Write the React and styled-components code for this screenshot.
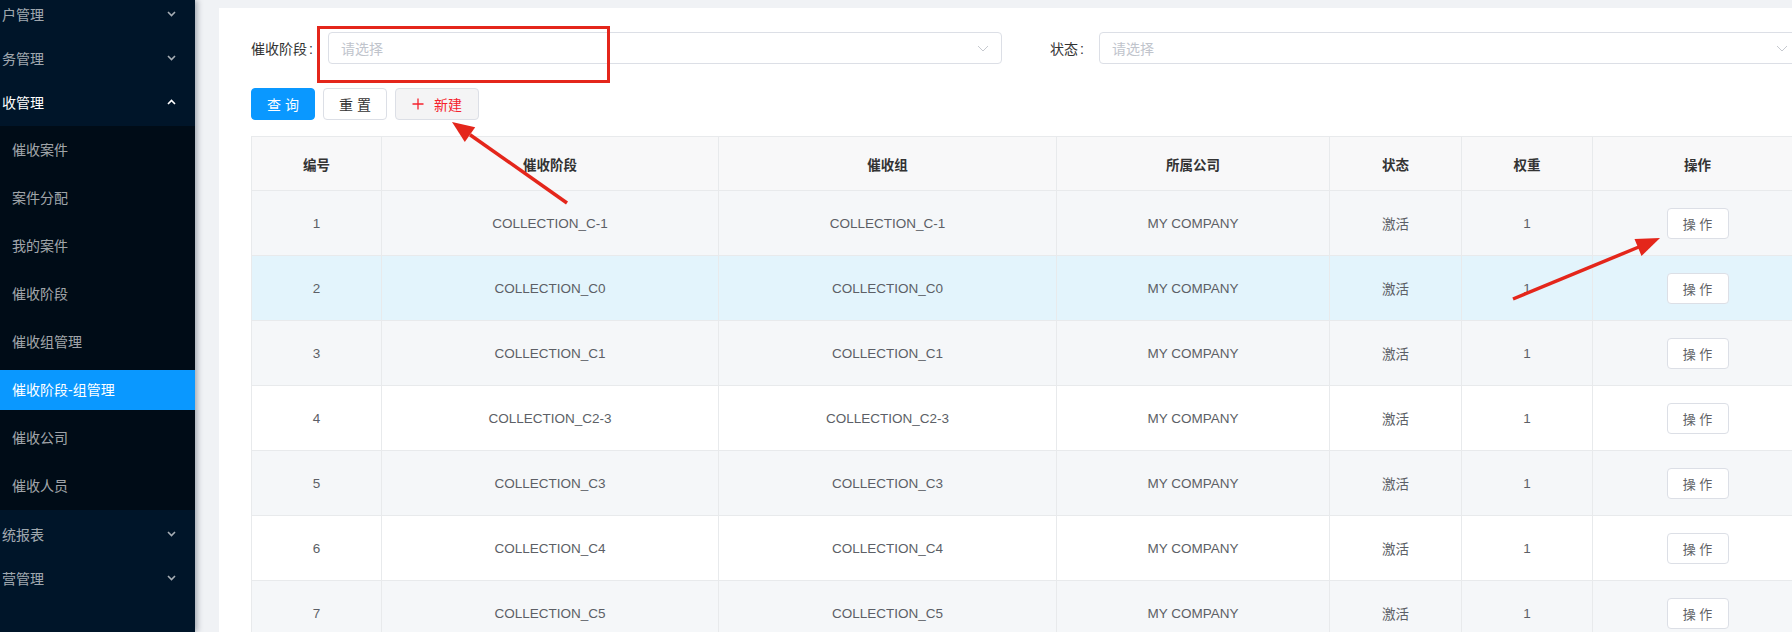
import React from "react";
import styled, { createGlobalStyle, css } from "styled-components";

const GlobalStyle = createGlobalStyle`
  html, body {
    margin: 0;
    padding: 0;
    overflow: hidden;
    background: #f0f2f5;
  }
  body {
    font-family: "Liberation Sans", "Noto Sans CJK SC", sans-serif;
    font-size: 14px;
    color: #333;
  }
  * { box-sizing: border-box; }
`;

// the sidebar is scrolled sideways in the shot, so only the visible part of each title is kept
const menus = [
  { title: "户管理" },
  { title: "务管理" },
  {
    title: "收管理",
    open: true,
    children: [
      "催收案件",
      "案件分配",
      "我的案件",
      "催收阶段",
      "催收组管理",
      "催收阶段-组管理",
      "催收公司",
      "催收人员",
    ],
    active: "催收阶段-组管理",
  },
  { title: "统报表" },
  { title: "营管理" },
];

const columns = [
  { key: "id", title: "编号", width: 130 },
  { key: "stage", title: "催收阶段", width: 337 },
  { key: "group", title: "催收组", width: 338 },
  { key: "company", title: "所属公司", width: 273 },
  { key: "status", title: "状态", width: 132 },
  { key: "weight", title: "权重", width: 131 },
  { key: "op", title: "操作", width: 210 },
];

const stages = ["C-1", "C0", "C1", "C2-3", "C3", "C4", "C5"];
const rows = stages.map((s, i) => ({
  id: i + 1,
  stage: `COLLECTION_${s}`,
  group: `COLLECTION_${s}`,
  company: "MY COMPANY",
  status: "激活",
  weight: 1,
}));

function Chevron({ up }) {
  return (
    <svg width="9" height="6" viewBox="0 0 9 6">
      <polyline
        points={up ? "1,5 4.5,1.5 8,5" : "1,1 4.5,4.5 8,1"}
        fill="none"
        stroke="currentColor"
        strokeWidth="1.6"
      />
    </svg>
  );
}

function SelectArrow() {
  return (
    <svg width="12" height="7" viewBox="0 0 12 7">
      <polyline points="1,1 6,6 11,1" fill="none" stroke="#c6c9cf" strokeWidth="1" />
    </svg>
  );
}

function Plus() {
  return (
    <svg width="12" height="12" viewBox="0 0 12 12">
      <path d="M6 0.5V11.5M0.5 6H11.5" stroke="#f5222d" strokeWidth="1.3" />
    </svg>
  );
}

function App() {
  return (
    <Layout>
      <GlobalStyle />
      <Sidebar>
        <Menu>
          {menus.map((m) => (
            <Group key={m.title}>
              <Title $open={m.open}>
                <span>{m.title}</span>
                <Chevron up={m.open} />
              </Title>
              {m.children && (
                <SubList>
                  {m.children.map((c) => (
                    <SubItem key={c} $active={c === m.active}>
                      {c}
                    </SubItem>
                  ))}
                </SubList>
              )}
            </Group>
          ))}
        </Menu>
      </Sidebar>

      <Main>
        <Card>
          <FormRow>
            <FormItem>
              <Label>
                催收阶段<Colon>:</Colon>
              </Label>
              <Select>
                <Placeholder>请选择</Placeholder>
                <SelectArrow />
              </Select>
            </FormItem>
            <FormItem>
              <Label>
                状态<Colon>:</Colon>
              </Label>
              <Select>
                <Placeholder>请选择</Placeholder>
                <SelectArrow />
              </Select>
            </FormItem>
          </FormRow>

          <ButtonRow>
            <Button $variant="primary">查 询</Button>
            <Button>重 置</Button>
            <Button $variant="create">
              <Plus />
              新建
            </Button>
          </ButtonRow>

          <Table>
            <colgroup>
              {columns.map((c) => (
                <col key={c.key} style={{ width: c.width }} />
              ))}
            </colgroup>
            <thead>
              <tr>
                {columns.map((c) => (
                  <Th key={c.key}>{c.title}</Th>
                ))}
              </tr>
            </thead>
            <tbody>
              {rows.map((r, i) => (
                <Tr key={r.id} $striped={i % 2 === 0} $hover={i === 1}>
                  <Td>{r.id}</Td>
                  <Td>{r.stage}</Td>
                  <Td>{r.group}</Td>
                  <Td>{r.company}</Td>
                  <Td>{r.status}</Td>
                  <Td>{r.weight}</Td>
                  <Td>
                    <OpButton>操 作</OpButton>
                  </Td>
                </Tr>
              ))}
            </tbody>
          </Table>
        </Card>
      </Main>

      <Annotations width="1792" height="632" viewBox="0 0 1792 632">
        <rect x="318.5" y="27.5" width="290" height="54" fill="none" stroke="#e4261b" strokeWidth="3" />
        <line x1="567" y1="203" x2="470" y2="134.7" stroke="#e4261b" strokeWidth="3.5" />
        <polygon points="452,122 475.2,127.3 464.8,142.1" fill="#e4261b" />
        <line x1="1513" y1="299" x2="1640" y2="246.5" stroke="#e4261b" strokeWidth="3.5" />
        <polygon points="1660,238 1641.5,256 1634.5,239" fill="#e4261b" />
      </Annotations>
    </Layout>
  );
}

const Layout = styled.div`
  position: relative;
  display: flex;
  width: 1792px;
  height: 632px;
  overflow: hidden;
  background: #f0f2f5;
`;

const Sidebar = styled.aside`
  flex: 0 0 195px;
  height: 100%;
  background: #001529;
  box-shadow: 2px 0 6px rgba(0, 21, 41, 0.35);
  position: relative;
  z-index: 1;
  overflow: hidden;
`;

const Menu = styled.nav`
  margin-top: -6px;
  display: flex;
  flex-direction: column;
`;

const Group = styled.div`
  padding-bottom: 4px;
`;

const Title = styled.div`
  height: 40px;
  display: flex;
  align-items: center;
  justify-content: space-between;
  padding: 0 19px 0 2px;
  font-size: 14px;
  color: ${(p) => (p.$open ? "#fff" : "rgba(255, 255, 255, 0.65)")};
`;

const SubList = styled.ul`
  list-style: none;
  margin: 4px 0 0;
  padding: 4px 0;
  background: #000c17;
  display: flex;
  flex-direction: column;
  gap: 8px;
`;

const SubItem = styled.li`
  height: 40px;
  line-height: 40px;
  padding-left: 12px;
  font-size: 14px;
  color: rgba(255, 255, 255, 0.65);
  ${(p) =>
    p.$active &&
    css`
      background: #0a98ff;
      color: #fff;
    `}
`;

const Main = styled.main`
  flex: 1;
  min-width: 0;
  padding: 8px 0 0 24px;
`;

const Card = styled.section`
  background: #fff;
  padding: 24px 32px;
  min-height: 700px;
`;

const FormRow = styled.div`
  display: grid;
  grid-template-columns: 751px 751px;
  column-gap: 48px;
`;

const FormItem = styled.div`
  display: flex;
  align-items: center;
`;

const Label = styled.label`
  font-size: 14px;
  color: #333;
  white-space: nowrap;
`;

const Colon = styled.span`
  margin: 0 15px 0 2px;
`;

const Select = styled.div`
  flex: 1;
  height: 32px;
  border: 1px solid #dcdfe6;
  border-radius: 4px;
  display: flex;
  align-items: center;
  justify-content: space-between;
  padding: 0 12px;
  background: #fff;
`;

const Placeholder = styled.span`
  font-size: 14px;
  color: #c0c4cc;
`;

const ButtonRow = styled.div`
  display: flex;
  gap: 8px;
  margin: 24px 0 16px;
`;

const variants = {
  primary: css`
    background: #0a98ff;
    border-color: #0a98ff;
    color: #fff;
  `,
  create: css`
    background: #f4f4f5;
    border-color: #dcdfe6;
    color: #f5222d;
    padding: 0 16px;
    gap: 10px;
  `,
};

const Button = styled.button`
  height: 32px;
  min-width: 64px;
  padding: 0 14px;
  display: inline-flex;
  align-items: center;
  justify-content: center;
  border: 1px solid #dcdfe6;
  border-radius: 4px;
  background: #fff;
  color: #333;
  font-family: inherit;
  font-size: 14px;
  white-space: pre;
  ${(p) => variants[p.$variant]}
`;

const Table = styled.table`
  width: 1551px;
  table-layout: fixed;
  border-collapse: collapse;
  border: 1px solid #e8eaec;
`;

const Th = styled.th`
  height: 54px;
  background: #f8f8f9;
  border: 1px solid #e8eaec;
  font-size: 13.5px;
  font-weight: 600;
  color: #333;
  text-align: center;
`;

const Tr = styled.tr`
  background: ${(p) => (p.$hover ? "#e3f4fc" : p.$striped ? "#f5f7f9" : "#fff")};
`;

const Td = styled.td`
  height: 65px;
  border: 1px solid #e8eaec;
  text-align: center;
  font-size: 13.5px;
  color: #5c5f66;
`;

const OpButton = styled.button`
  width: 62px;
  height: 31px;
  border: 1px solid #dcdfe6;
  border-radius: 4px;
  background: #fff;
  color: #606266;
  font-family: inherit;
  font-size: 13px;
  white-space: pre;
`;

const Annotations = styled.svg`
  position: absolute;
  left: 0;
  top: 0;
  pointer-events: none;
  z-index: 2;
`;

export default App;
